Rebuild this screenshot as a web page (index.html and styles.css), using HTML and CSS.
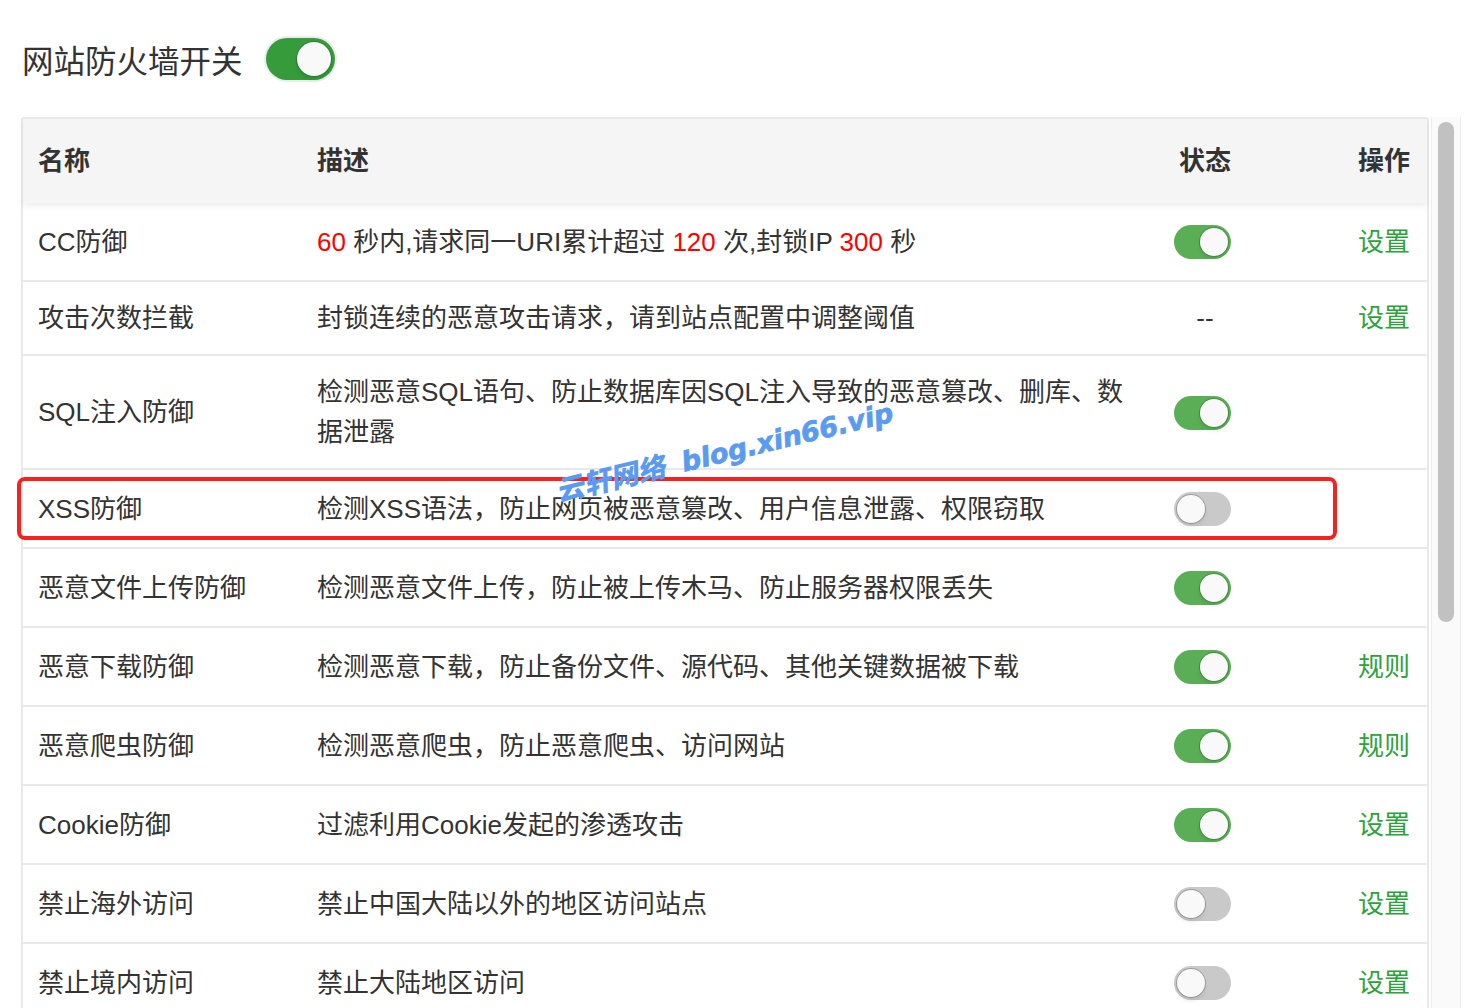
FILE: index.html
```html
<!DOCTYPE html>
<html lang="zh-CN">
<head>
    <meta charset="UTF-8">
    <meta name="viewport" content="width=device-width, initial-scale=1.0">
    <title>网站防火墙</title>
    <link rel="stylesheet" href="styles.css">
</head>
<body>
    <div class="page">
        <div class="switch-bar">
            <span class="switch-title">网站防火墙开关</span>
            <span class="toggle toggle-lg on"><i></i></span>
        </div>

        <div class="panel">
            <div class="table-box">
                <table class="rule-table">
                    <colgroup>
                        <col class="col-name">
                        <col class="col-desc">
                        <col class="col-state">
                        <col class="col-op">
                    </colgroup>
                    <thead>
                        <tr>
                            <th>名称</th>
                            <th>描述</th>
                            <th class="center">状态</th>
                            <th class="right">操作</th>
                        </tr>
                    </thead>
                    <tbody>
                        <tr>
                            <td>CC防御</td>
                            <td><em>60</em> 秒内,请求同一URI累计超过 <em>120</em> 次,封锁IP <em>300</em> 秒</td>
                            <td class="center"><span class="toggle on"><i></i></span></td>
                            <td class="right"><a href="#">设置</a></td>
                        </tr>
                        <tr>
                            <td>攻击次数拦截</td>
                            <td>封锁连续的恶意攻击请求，请到站点配置中调整阈值</td>
                            <td class="center">--</td>
                            <td class="right"><a href="#">设置</a></td>
                        </tr>
                        <tr>
                            <td>SQL注入防御</td>
                            <td class="desc-wrap">检测恶意SQL语句、防止数据库因SQL注入导致的恶意篡改、删库、数据泄露</td>
                            <td class="center"><span class="toggle on"><i></i></span></td>
                            <td class="right"></td>
                        </tr>
                        <tr>
                            <td>XSS防御</td>
                            <td>检测XSS语法，防止网页被恶意篡改、用户信息泄露、权限窃取</td>
                            <td class="center"><span class="toggle"><i></i></span></td>
                            <td class="right"></td>
                        </tr>
                        <tr>
                            <td>恶意文件上传防御</td>
                            <td>检测恶意文件上传，防止被上传木马、防止服务器权限丢失</td>
                            <td class="center"><span class="toggle on"><i></i></span></td>
                            <td class="right"></td>
                        </tr>
                        <tr>
                            <td>恶意下载防御</td>
                            <td>检测恶意下载，防止备份文件、源代码、其他关键数据被下载</td>
                            <td class="center"><span class="toggle on"><i></i></span></td>
                            <td class="right"><a href="#">规则</a></td>
                        </tr>
                        <tr>
                            <td>恶意爬虫防御</td>
                            <td>检测恶意爬虫，防止恶意爬虫、访问网站</td>
                            <td class="center"><span class="toggle on"><i></i></span></td>
                            <td class="right"><a href="#">规则</a></td>
                        </tr>
                        <tr>
                            <td>Cookie防御</td>
                            <td>过滤利用Cookie发起的渗透攻击</td>
                            <td class="center"><span class="toggle on"><i></i></span></td>
                            <td class="right"><a href="#">设置</a></td>
                        </tr>
                        <tr>
                            <td>禁止海外访问</td>
                            <td>禁止中国大陆以外的地区访问站点</td>
                            <td class="center"><span class="toggle"><i></i></span></td>
                            <td class="right"><a href="#">设置</a></td>
                        </tr>
                        <tr>
                            <td>禁止境内访问</td>
                            <td>禁止大陆地区访问</td>
                            <td class="center"><span class="toggle"><i></i></span></td>
                            <td class="right"><a href="#">设置</a></td>
                        </tr>
                    </tbody>
                </table>

                <!-- highlight frame around the XSS row -->
                <div class="mark-box"></div>
                <div class="watermark"><span class="wm-cn">云轩网络</span> <span class="wm-en">blog.xin66.vip</span></div>
            </div>

            <div class="scroll-track"><div class="scroll-thumb"></div></div>
        </div>
    </div>
</body>
</html>
```

FILE: styles.css
```css
* {
    margin: 0;
    padding: 0;
    box-sizing: border-box;
}

html, body {
    height: 100%;
    overflow: hidden;
}

body {
    background: #fff;
    color: #333;
    font-family: 'Liberation Sans', 'Noto Sans CJK SC', sans-serif;
}

.page {
    padding: 38px 0 0 21px;
}

/* top switch */
.switch-bar {
    display: flex;
    align-items: center;
    height: 42px;
    padding-left: 1px;
}

.switch-title {
    font-size: 31.5px;
    color: #333;
    margin-right: 23px;
}

/* toggles */
.toggle {
    display: inline-block;
    position: relative;
    width: 57px;
    height: 34px;
    margin: 6px 5px 5px 0;
    border-radius: 17px;
    background: #c9c9c9;
    vertical-align: middle;
}

.toggle i {
    position: absolute;
    top: 3px;
    left: 3px;
    width: 28px;
    height: 28px;
    border-radius: 50%;
    background: #f9f9f9;
    box-shadow: 0 0 0 1px rgba(0, 0, 0, 0.22), 0 4px 4px rgba(0, 0, 0, 0.08);
}

.toggle.on {
    background: #5aae55;
}

.toggle.on i {
    left: 26px;
    box-shadow: 0 0 0 1px rgba(20, 90, 20, 0.35), 0 4px 4px rgba(0, 0, 0, 0.08);
}

.toggle-lg {
    width: 69px;
    height: 42px;
    margin: 0;
    border-radius: 21px;
    box-shadow: 0 0 0 2px #ececec;
}

.toggle-lg.on {
    background: #359b3b;
}

.toggle-lg i,
.toggle-lg.on i {
    top: 4px;
    width: 34px;
    height: 34px;
}

.toggle-lg.on i {
    left: 31px;
}

/* table panel */
.panel {
    display: flex;
    align-items: flex-start;
    margin-top: 37px;
}

.table-box {
    position: relative;
}

.rule-table {
    width: 1408px;
    table-layout: fixed;
    border-collapse: separate;
    border-spacing: 0;
    border: 2px solid #e9e9e9;
    border-bottom: none;
    border-radius: 3px 3px 0 0;
    font-size: 26px;
}

.col-name { width: 279px; }
.col-desc { width: 843px; }
.col-state { width: 120px; }
.col-op { width: 162px; }

.rule-table thead tr {
    background: #f5f5f5;
    box-shadow: 0 3px 6px rgba(0, 0, 0, 0.07);
    position: relative;
}

.rule-table th {
    height: 84px;
    padding: 0 15px 6px;
    text-align: left;
    font-weight: bold;
    color: #333;
}

.rule-table td {
    padding: 16px 15px;
    line-height: 40px;
    border-bottom: 2px solid #e9e9e9;
    vertical-align: middle;
    color: #333;
}

.rule-table .center {
    text-align: center;
}

.rule-table .right {
    text-align: right;
    padding-right: 17px;
}

.rule-table em {
    font-style: normal;
    color: #f00;
}

.desc-wrap {
    padding-right: 22px;
}

.rule-table a {
    color: #2fa23b;
    text-decoration: none;
}

/* red annotation frame */
.mark-box {
    position: absolute;
    left: -4px;
    top: 360px;
    width: 1320px;
    height: 63px;
    border: 4px solid #f5231f;
    border-radius: 8px;
}

.watermark {
    position: absolute;
    left: 542px;
    top: 352px;
    white-space: nowrap;
    color: #5a9bf0;
    font-weight: bold;
    transform: rotate(-13.5deg);
    transform-origin: left bottom;
}

.wm-cn {
    display: inline-block;
    font-family: 'Noto Sans CJK SC', sans-serif;
    font-weight: 900;
    font-size: 28px;
    transform: skewX(-12deg);
}

.wm-en {
    font-family: 'DejaVu Sans', sans-serif;
    font-style: oblique;
    font-size: 27px;
    margin-left: 10px;
    -webkit-text-stroke: 0.8px #5a9bf0;
}

/* scrollbar column */
.scroll-track {
    width: 30px;
    height: 900px;
    margin-left: 2px;
    padding: 5px 6px 0 6px;
    background: #fafafa;
    border-left: 1px solid #ececec;
    border-right: 1px solid #ececec;
}

.scroll-thumb {
    width: 16px;
    height: 500px;
    border-radius: 8px;
    background: #c1c1c1;
}
```
